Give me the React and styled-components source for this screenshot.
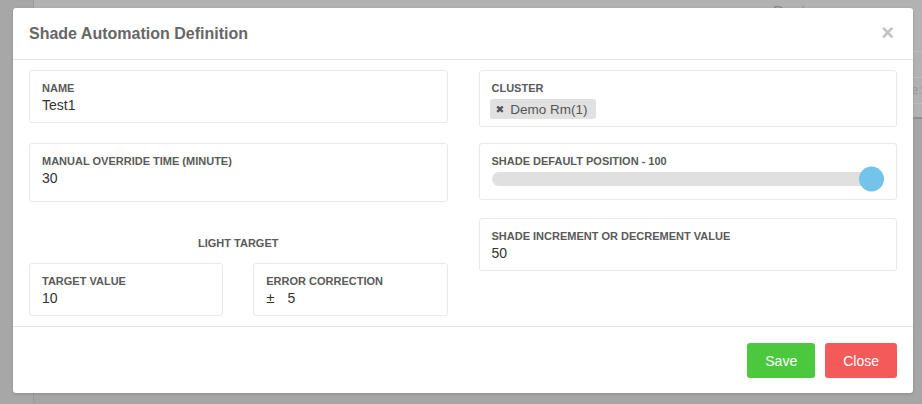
import React from 'react'
import styled, { createGlobalStyle } from 'styled-components'

const GlobalStyle = createGlobalStyle`
  html, body {
    margin: 0;
    padding: 0;
    width: 922px;
    height: 404px;
    overflow: hidden;
    font-family: "Liberation Sans", Arial, "DejaVu Sans", sans-serif;
  }
  * { box-sizing: border-box; }
`

// background page (dimmed behind the modal)
const Page = styled.div`
  position: relative;
  width: 922px;
  height: 404px;
  display: flex;
  background-color: #a5a5a5;
`

const Sidebar = styled.div`
  width: 34px;
  background-color: #a7a7a7;
  border-right: 1px solid #9a9a9a;
`

const Main = styled.div`
  flex: 1;
  display: flex;
  flex-direction: column;
`

const TopPanel = styled.div`
  height: 119px;
  background-color: #b2b2b2;
  border-bottom: 2px solid #8f8f8f;
  display: flex;
  flex-direction: column;
`

const PanelTitle = styled.div`
  height: 38px;
  padding: 3px 0 0 739px;
  font-size: 16px;
  line-height: 20px;
  color: #8a8a8a;
`

const PanelRow = styled.div`
  height: 13px;
  margin-top: 13px;
  border-top: 1px solid #bdbdbd;
  display: flex;
  justify-content: flex-end;
  font-size: 13px;
  line-height: 24px;
  color: #999;
  white-space: nowrap;
`

const Overlay = styled.div`
  position: absolute;
  inset: 0;
  padding: 8px 0 0 13px;
`

const Modal = styled.div`
  width: 900px;
  background-color: #fff;
  border-radius: 3px;
  box-shadow: 0 1px 3px rgba(0, 0, 0, 0.15);
`

const Header = styled.div`
  display: flex;
  justify-content: space-between;
  align-items: center;
  padding: 16px 19px 15px 16px;
  border-bottom: 1px solid #e5e5e5;
`

const Title = styled.h4`
  margin: 0;
  font-size: 16px;
  font-weight: bold;
  line-height: 20px;
  color: #666;
`

const CloseX = styled.span`
  font-size: 22px;
  font-weight: bold;
  line-height: 20px;
  color: #c2c2c2;
  margin-top: -3px;
`

const Body = styled.div`
  display: grid;
  grid-template-columns: 1fr 1fr;
  column-gap: 31px;
  align-items: start;
  padding: 10px 16px;
`

const Column = styled.div`
  display: flex;
  flex-direction: column;
`

const Card = styled.div`
  border: 1px solid #e9e9e9;
  border-radius: 3px;
  padding: 9px 12px ${(p) => p.$pb || 8}px;
  margin-top: ${(p) => p.$mt || 0}px;
`

const Label = styled.div`
  font-size: 11px;
  font-weight: bold;
  line-height: 16px;
  color: #5a5a5a;
  text-transform: uppercase;
`

const Value = styled.div`
  font-size: 14px;
  line-height: 18px;
  color: #333;
`

const PlusMinus = styled.span`
  font-size: 15px;
  margin-right: 13px;
`

const SectionTitle = styled.div`
  margin-top: 33px;
  margin-bottom: 12px;
  text-align: center;
  font-size: 11px;
  font-weight: bold;
  line-height: 16px;
  color: #5a5a5a;
`

const SubRow = styled.div`
  display: grid;
  grid-template-columns: 1fr 1fr;
  column-gap: 30px;
`

const TagList = styled.div`
  margin-top: 3px;
  margin-left: -2px;
  display: flex;
`

const Tag = styled.span`
  display: inline-flex;
  align-items: center;
  height: 20px;
  padding: 0 8px 0 6px;
  border-radius: 3px;
  background-color: #e1e1e1;
  font-size: 13.5px;
  color: #555;
`

const TagRemove = styled.span`
  font-family: "DejaVu Sans", sans-serif;
  font-size: 10.5px;
  margin-right: 6px;
  color: #555;
`

const Slider = styled.div`
  position: relative;
  height: 19px;
  display: flex;
  align-items: center;
`

const Track = styled.div`
  width: 100%;
  height: 14px;
  border-radius: 7px;
  background-color: #e0e0e0;
`

const Thumb = styled.div`
  position: absolute;
  top: 50%;
  left: ${(p) => p.$pos}%;
  transform: translate(-100%, -50%);
  width: 25px;
  height: 25px;
  border-radius: 50%;
  background-color: #74c3ea;
`

const Footer = styled.div`
  display: flex;
  justify-content: flex-end;
  gap: 10px;
  padding: 16px 16px 15px;
  border-top: 1px solid #e5e5e5;
`

const Button = styled.button`
  height: 35px;
  padding: 0 18px;
  border: none;
  border-radius: 3px;
  font-family: inherit;
  font-size: 14px;
  color: #fff;
  background-color: ${(p) => (p.$variant === 'danger' ? '#f35b5b' : '#4cc83f')};
  cursor: pointer;
`

export default function App() {
  const defaultPosition = 100

  return (
    <>
      <GlobalStyle />
      <Page>
        <Sidebar />
        <Main>
          <TopPanel>
            <PanelTitle>Devices</PanelTitle>
            <PanelRow />
            <PanelRow>Type:</PanelRow>
            <PanelRow />
          </TopPanel>
        </Main>

        <Overlay>
          <Modal>
            <Header>
              <Title>Shade Automation Definition</Title>
              <CloseX>×</CloseX>
            </Header>

            <Body>
              <Column>
                <Card>
                  <Label>Name</Label>
                  <Value>Test1</Value>
                </Card>
                <Card $mt={20} $pb={14}>
                  <Label>Manual Override Time (Minute)</Label>
                  <Value>30</Value>
                </Card>
                <SectionTitle>LIGHT TARGET</SectionTitle>
                <SubRow>
                  <Card>
                    <Label>Target Value</Label>
                    <Value>10</Value>
                  </Card>
                  <Card>
                    <Label>Error Correction</Label>
                    <Value><PlusMinus>±</PlusMinus>5</Value>
                  </Card>
                </SubRow>
              </Column>

              <Column>
                <Card $pb={7}>
                  <Label>Cluster</Label>
                  <TagList>
                    <Tag><TagRemove>✖</TagRemove>Demo Rm(1)</Tag>
                  </TagList>
                </Card>
                <Card $mt={16} $pb={11}>
                  <Label>Shade Default Position - {defaultPosition}</Label>
                  <Slider>
                    <Track />
                    <Thumb $pos={defaultPosition} />
                  </Slider>
                </Card>
                <Card $mt={18}>
                  <Label>Shade Increment or Decrement Value</Label>
                  <Value>50</Value>
                </Card>
              </Column>
            </Body>

            <Footer>
              <Button>Save</Button>
              <Button $variant="danger">Close</Button>
            </Footer>
          </Modal>
        </Overlay>
      </Page>
    </>
  )
}
